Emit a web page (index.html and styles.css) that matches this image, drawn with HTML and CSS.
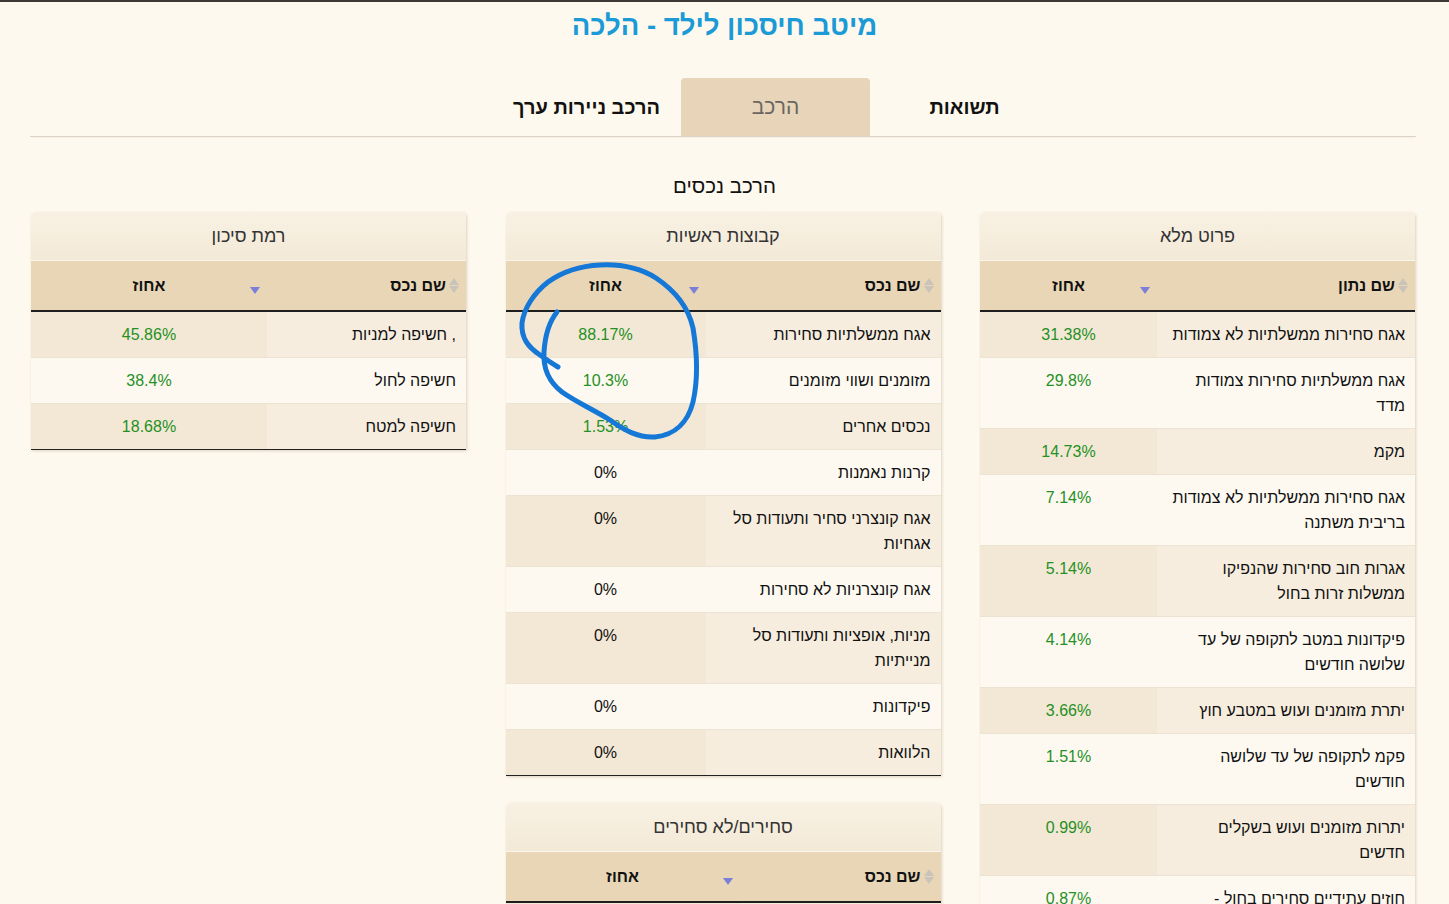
FILE: index.html
```html
<!DOCTYPE html>
<html lang="he" dir="rtl">
<head>
<meta charset="utf-8">
<title>מיטב חיסכון לילד - הלכה</title>
<link rel="stylesheet" href="styles.css">
</head>
<body>
<h1 class="title">מיטב חיסכון לילד - הלכה</h1>

<nav class="tabs">
  <a class="tab">תשואות</a>
  <a class="tab active">הרכב</a>
  <a class="tab">הרכב ניירות ערך</a>
</nav>

<h2 class="section-title">הרכב נכסים</h2>

<div class="grid">
  <div class="col">
    <section class="panel">
      <div class="panel-title">פרוט מלא</div>
      <table class="data t-full">
        <colgroup><col class="c-name"><col></colgroup>
        <thead>
          <tr><th class="th-name"><span class="sort-both"></span>שם נתון</th><th class="th-pct">אחוז<span class="sort-desc"></span></th></tr>
        </thead>
        <tbody>
          <tr><td>אגח סחירות ממשלתיות לא צמודות</td><td class="pct pos">31.38%</td></tr>
          <tr><td>אגח ממשלתיות סחירות צמודות מדד</td><td class="pct pos">29.8%</td></tr>
          <tr><td>מקמ</td><td class="pct pos">14.73%</td></tr>
          <tr><td>אגח סחירות ממשלתיות לא צמודות בריבית משתנה</td><td class="pct pos">7.14%</td></tr>
          <tr><td>אגרות חוב סחירות שהנפיקו ממשלות זרות בחול</td><td class="pct pos">5.14%</td></tr>
          <tr><td>פיקדונות במטב לתקופה של עד שלושה חודשים</td><td class="pct pos">4.14%</td></tr>
          <tr><td>יתרת מזומנים ועוש במטבע חוץ</td><td class="pct pos">3.66%</td></tr>
          <tr><td>פקמ לתקופה של עד שלושה חודשים</td><td class="pct pos">1.51%</td></tr>
          <tr><td>יתרות מזומנים ועוש בשקלים חדשים</td><td class="pct pos">0.99%</td></tr>
          <tr><td>חוזים עתידיים סחירים בחול - מדדים</td><td class="pct pos">0.87%</td></tr>
        </tbody>
      </table>
    </section>
  </div>

  <div class="col">
    <section class="panel">
      <div class="panel-title">קבוצות ראשיות</div>
      <table class="data t-main">
        <colgroup><col class="c-name"><col></colgroup>
        <thead>
          <tr><th class="th-name"><span class="sort-both"></span>שם נכס</th><th class="th-pct">אחוז<span class="sort-desc"></span></th></tr>
        </thead>
        <tbody>
          <tr><td>אגח ממשלתיות סחירות</td><td class="pct pos">88.17%</td></tr>
          <tr><td>מזומנים ושווי מזומנים</td><td class="pct pos">10.3%</td></tr>
          <tr><td>נכסים אחרים</td><td class="pct pos">1.53%</td></tr>
          <tr><td>קרנות נאמנות</td><td class="pct">0%</td></tr>
          <tr><td>אגח קונצרני סחיר ותעודות סל אגחיות</td><td class="pct">0%</td></tr>
          <tr><td>אגח קונצרניות לא סחירות</td><td class="pct">0%</td></tr>
          <tr><td>מניות, אופציות ותעודות סל מנייתיות</td><td class="pct">0%</td></tr>
          <tr><td>פיקדונות</td><td class="pct">0%</td></tr>
          <tr><td>הלוואות</td><td class="pct">0%</td></tr>
        </tbody>
      </table>
    </section>

    <section class="panel">
      <div class="panel-title">סחירים/לא סחירים</div>
      <table class="data t-trade">
        <colgroup><col class="c-name"><col></colgroup>
        <thead>
          <tr><th class="th-name"><span class="sort-both"></span>שם נכס</th><th class="th-pct">אחוז<span class="sort-desc"></span></th></tr>
        </thead>
        <tbody>
          <tr><td>סחירים</td><td class="pct pos">95.3%</td></tr>
          <tr><td>לא סחירים</td><td class="pct pos">4.7%</td></tr>
        </tbody>
      </table>
    </section>
  </div>

  <div class="col">
    <section class="panel">
      <div class="panel-title">רמת סיכון</div>
      <table class="data t-risk">
        <colgroup><col class="c-name"><col></colgroup>
        <thead>
          <tr><th class="th-name"><span class="sort-both"></span>שם נכס</th><th class="th-pct">אחוז<span class="sort-desc"></span></th></tr>
        </thead>
        <tbody>
          <tr><td>, חשיפה למניות</td><td class="pct pos">45.86%</td></tr>
          <tr><td>חשיפה לחול</td><td class="pct pos">38.4%</td></tr>
          <tr><td>חשיפה למטח</td><td class="pct pos">18.68%</td></tr>
        </tbody>
      </table>
    </section>
  </div>
</div>

<svg class="annotation" width="1449" height="904" viewBox="0 0 1449 904" aria-hidden="true">
  <path d="M557 312 C549 322 545 336 544 352 C543 368 549 382 562 392 C576 402 594 410 610 420 C624 430 638 438 655 437 C675 435 688 422 693 402 C698 380 697 352 693 328 C688 306 674 290 656 278 C640 268 620 264 600 265 C580 266 562 272 548 282 C534 293 524 308 522 323 C521 338 528 347 540 355 C547 360 553 364 558 367" fill="none" stroke="#1577d6" stroke-width="5" stroke-linecap="round" stroke-linejoin="round"/>
</svg>
</body>
</html>
```

FILE: styles.css
```css
html, body {
  margin: 0;
  padding: 0;
}

body {
  background: #fef9ee;
  border-top: 2px solid #3d3833;
  font-family: "Liberation Sans", Arial, "DejaVu Sans", sans-serif;
  color: #222;
  position: relative;
  min-height: 902px;
}

.title {
  margin: 7px 0 0;
  text-align: center;
  font-size: 27.5px;
  line-height: 34px;
  font-weight: bold;
  color: #1a9ad6;
}

.tabs {
  display: flex;
  margin: 35px 33px 0 30px;
  padding-right: 357px;
  border-bottom: 1px solid #ddd3c7;
  box-shadow: 0 3px 0 -2px #f6efe3;
}

.tab {
  width: 189px;
  height: 58px;
  display: flex;
  align-items: center;
  justify-content: center;
  font-size: 20px;
  font-weight: bold;
  color: #111;
  border-radius: 4px 4px 0 0;
}

.tab.active {
  background: #e8d5b9;
  color: #6b6661;
  font-weight: normal;
  font-size: 21px;
}

.section-title {
  margin: 37px 0 0;
  text-align: center;
  font-size: 20.5px;
  line-height: 24px;
  font-weight: normal;
  color: #111;
}

.grid {
  display: grid;
  grid-template-columns: repeat(3, 435px);
  column-gap: 39.5px;
  margin: 14px 34px 0 31px;
  align-items: start;
}

.col {
  display: flex;
  flex-direction: column;
  gap: 27px;
}

.panel {
  border-radius: 5px 5px 0 0;
  box-shadow: 1px 1px 3px rgba(120, 100, 70, 0.25);
  background: #fdf9f1;
}

.panel-title {
  height: 48px;
  display: flex;
  align-items: center;
  justify-content: center;
  font-size: 18px;
  color: #333;
  border-radius: 5px 5px 0 0;
  background: linear-gradient(#f8f1e3, #f3e9d7);
  border-bottom: 1px solid #fbf6ec;
}

.data {
  width: 100%;
  border-collapse: collapse;
  table-layout: fixed;
  font-size: 16px;
}

.t-full .c-name { width: 258px; }
.t-main .c-name { width: 235px; }
.t-trade .c-name { width: 201px; }
.t-risk .c-name { width: 199px; }

.data thead th {
  height: 49px;
  padding: 0;
  background: #e8d6b7;
  border-bottom: 2px solid #1e1e1e;
  font-weight: bold;
  font-size: 16px;
  color: #111;
  position: relative;
}

.th-name {
  text-align: right;
  padding-right: 7px !important;
}

.th-pct {
  text-align: center;
}

.sort-both {
  display: inline-block;
  vertical-align: middle;
  width: 10px;
  height: 17px;
  margin-left: 3px;
  margin-top: -2px;
  position: relative;
}

.sort-both::before,
.sort-both::after {
  content: "";
  position: absolute;
  left: 0;
  border-left: 5px solid transparent;
  border-right: 5px solid transparent;
}

.sort-both::before {
  top: 1px;
  border-bottom: 7px solid #c9c3b9;
}

.sort-both::after {
  bottom: 1px;
  border-top: 7px solid #c9c3b9;
}

.sort-desc {
  position: absolute;
  right: 7px;
  top: 26px;
  width: 0;
  height: 0;
  border-left: 5px solid transparent;
  border-right: 5px solid transparent;
  border-top: 7px solid #7c7fd8;
}

.data tbody td {
  padding: 10px 10px 10px 13px;
  line-height: 25px;
  vertical-align: top;
  text-align: right;
  border-bottom: 1px solid #ece3d2;
  color: #111;
}

.data tbody tr:nth-child(odd) td {
  background: #f6eddf;
}

.data tbody tr:nth-child(odd) td.pct {
  background: #f3e8d5;
}

.data tbody tr:nth-child(even) td {
  background: #fdf9f1;
}

.data tbody tr:last-child td {
  border-bottom: 1.5px solid #222;
}

.data tbody td.pct {
  text-align: center;
  padding-left: 0;
  padding-right: 0;
  color: #111;
}

.data tbody td.pct.pos {
  color: #259025;
}

.annotation {
  position: absolute;
  left: 0;
  top: -2px;
  pointer-events: none;
}
```
